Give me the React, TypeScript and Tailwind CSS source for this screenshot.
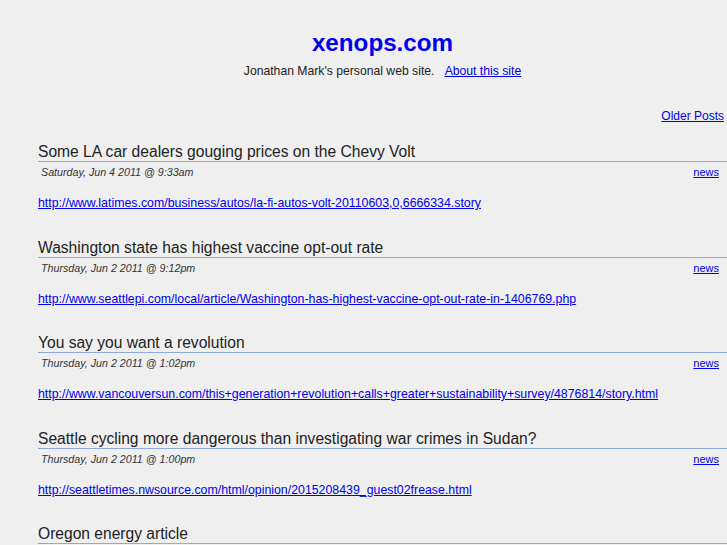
import React from "react";

type Post = {
    title: string;
    date: string;
    url: string;
    tag: string;
};

const posts: Post[] = [
    {
        title: "Some LA car dealers gouging prices on the Chevy Volt",
        date: "Saturday, Jun 4 2011 @ 9:33am",
        url: "http://www.latimes.com/business/autos/la-fi-autos-volt-20110603,0,6666334.story",
        tag: "news",
    },
    {
        title: "Washington state has highest vaccine opt-out rate",
        date: "Thursday, Jun 2 2011 @ 9:12pm",
        url: "http://www.seattlepi.com/local/article/Washington-has-highest-vaccine-opt-out-rate-in-1406769.php",
        tag: "news",
    },
    {
        title: "You say you want a revolution",
        date: "Thursday, Jun 2 2011 @ 1:02pm",
        url: "http://www.vancouversun.com/this+generation+revolution+calls+greater+sustainability+survey/4876814/story.html",
        tag: "news",
    },
    {
        title: "Seattle cycling more dangerous than investigating war crimes in Sudan?",
        date: "Thursday, Jun 2 2011 @ 1:00pm",
        url: "http://seattletimes.nwsource.com/html/opinion/2015208439_guest02frease.html",
        tag: "news",
    },
    {
        title: "Oregon energy article",
        date: "Thursday, Jun 2 2011 @ 12:41pm",
        url: "http://www.oregonlive.com/",
        tag: "news",
    },
];

const PostEntry: React.FC<{ post: Post; first: boolean }> = ({ post, first }) => {
    return (
        <div className={first ? "mt-[19px]" : "mt-[27.5px]"}>
            <h2 className="text-[15.6px] leading-[19px] text-[#222] border-b border-[#8eaad6]">{post.title}</h2>
            <div className="flex justify-between items-baseline mt-[4px] leading-[13px]">
                <span className="italic text-[10.7px] text-[#333] pl-[3px]">{post.date}</span>
                <a href="#" className="text-[11px] text-[#0000ee] underline pr-[8px]">
                    {post.tag}
                </a>
            </div>
            <div className="mt-[17px] text-[12.35px] leading-[14px]">
                <a href="#" className="text-[#0000ee] underline whitespace-nowrap">
                    {post.url}
                </a>
            </div>
        </div>
    );
};

const App: React.FC = () => {
    return (
        <div className="h-[545px] bg-[#efefef] overflow-hidden font-['Liberation_Sans',Arial,sans-serif]">
            <div className="pl-[38px] pt-[29px]">
                <header className="text-center">
                    <h1 className="text-[24.2px] leading-[28px] font-bold text-[#0000ee]">xenops.com</h1>
                    <p className="mt-[7px] text-[12.2px] leading-[14px] text-[#222]">
                        Jonathan Mark's personal web site.&nbsp;&nbsp;&nbsp;
                        <a href="#" className="text-[#0000ee] underline">
                            About this site
                        </a>
                    </p>
                </header>

                <div className="mt-[31px] text-right text-[12px] leading-[14px] pr-[3px]">
                    <a href="#" className="text-[#0000ee] underline">
                        Older Posts
                    </a>
                </div>

                {posts.map((post, index) => (
                    <PostEntry key={index} post={post} first={index === 0} />
                ))}
            </div>
        </div>
    );
};

export default App;
